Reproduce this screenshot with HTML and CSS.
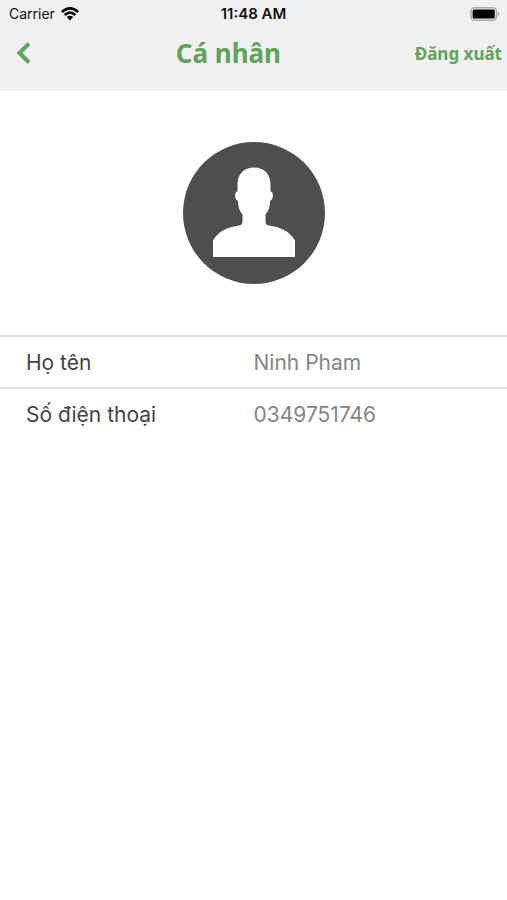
FILE: index.html
```html
<!DOCTYPE html>
<html lang="vi">
<head>
<meta charset="utf-8">
<meta name="viewport" content="width=device-width, initial-scale=1">
<title>Cá nhân</title>
<link rel="stylesheet" href="styles.css">
</head>
<body>
<header class="top">
  <div class="status">
    <div class="carrier">Carrier
      <svg class="wifi" viewBox="0 0 18 14" aria-hidden="true"><g fill="none" stroke="#000" stroke-width="2.6"><path d="M.9 4.900Q9-2 17.100 4.900"/><path d="M3.700 7.900Q9 3.400 14.300 7.900"/></g><path d="M5.800 10Q9 7.400 12.200 10L9 13.400Z"/></svg>
    </div>
    <div class="time">11:48 AM</div>
    <svg class="battery" viewBox="0 0 30 14" aria-hidden="true"><rect x="1" y=".8" width="25.400" height="12.400" rx="3.600" fill="none" stroke="#aaa" stroke-width="1.500"/><rect x="2.600" y="2.400" width="22.200" height="9.200" rx="1.500"/><path d="M27.600 4.600Q31 7 27.600 9.400Z" fill="#aaa"/></svg>
  </div>
  <nav class="bar">
    <button class="back" aria-label="Quay lại"><svg viewBox="0 0 16 24" aria-hidden="true"><path d="M13 2.500L3.500 12L13 21.500" fill="none" stroke="#5fa35c" stroke-width="4"/></svg></button>
    <h1>Cá nhân</h1>
    <button class="logout">Đăng xuất</button>
  </nav>
</header>
<main>
  <div class="profile">
    <svg class="avatar" viewBox="0 0 142 142" role="img" aria-label="Ảnh đại diện"><circle cx="71" cy="71" r="71" fill="#4e4e4e"/><path fill="#fff" d="M71 25.500C81 25.500 87.500 32 87.500 42V49.500C91 49.500 90.500 58 87 59C87 65 85.500 69 82.500 72.500V79C82.500 82 83.500 83 86 83.500C96 85 106 88 112 98.500V115H30V98.500C36 88 46 85 56 83.500C58.500 83 59.500 82 59.500 79V72.500C56.500 69 55 65 55 59C51.500 58 51 49.500 54.500 49.500V42C54.500 32 61 25.500 71 25.500Z"/></svg>
  </div>
  <dl class="info">
    <div class="row"><dt>Họ tên</dt><dd>Ninh Pham</dd></div>
    <div class="row"><dt>Số điện thoại</dt><dd>0349751746</dd></div>
  </dl>
</main>
</body>
</html>
```
FILE: styles.css
```css
* { box-sizing: border-box; }
body { margin: 0; background: #fff; font-family: Inter, "Liberation Sans", sans-serif; }
.top { background: #f1f1f1; padding-bottom: 12px; }
.status { display: grid; grid-template-columns: 1fr auto 1fr; align-items: center; height: 27px; padding: 0 7px; font-size: 14px; color: #111; }
.carrier { display: flex; align-items: center; gap: 6px; padding-left: 2px; }
.wifi { width: 18px; height: 14px; }
.time { font-size: 15px; font-weight: 600; }
.battery { width: 30px; height: 14px; justify-self: end; }
.bar { display: flex; justify-content: space-between; align-items: center; height: 52px; padding: 0 5px 0 16px; color: #5fa35c; font-family: "Noto Sans", sans-serif; }
button { border: 0; padding: 0; background: none; color: inherit; font: inherit; }
.back { display: flex; width: 26px; }
.back svg { width: 16px; height: 24px; }
h1 { margin: 0; font-size: 26px; line-height: 36px; font-weight: 700; }
.logout { font-size: 17px; font-weight: 700; }
.profile { display: flex; justify-content: center; padding: 51px 0; }
.avatar { width: 142px; height: 142px; }
.info { margin: 0; }
.row { display: grid; grid-template-columns: 1fr 1fr; align-items: center; height: 52px; border-top: 2px solid #e2e2e2; font-size: 21px; }
dt { padding-left: 26px; color: #444; }
dd { margin: 0; color: #858585; }
```
